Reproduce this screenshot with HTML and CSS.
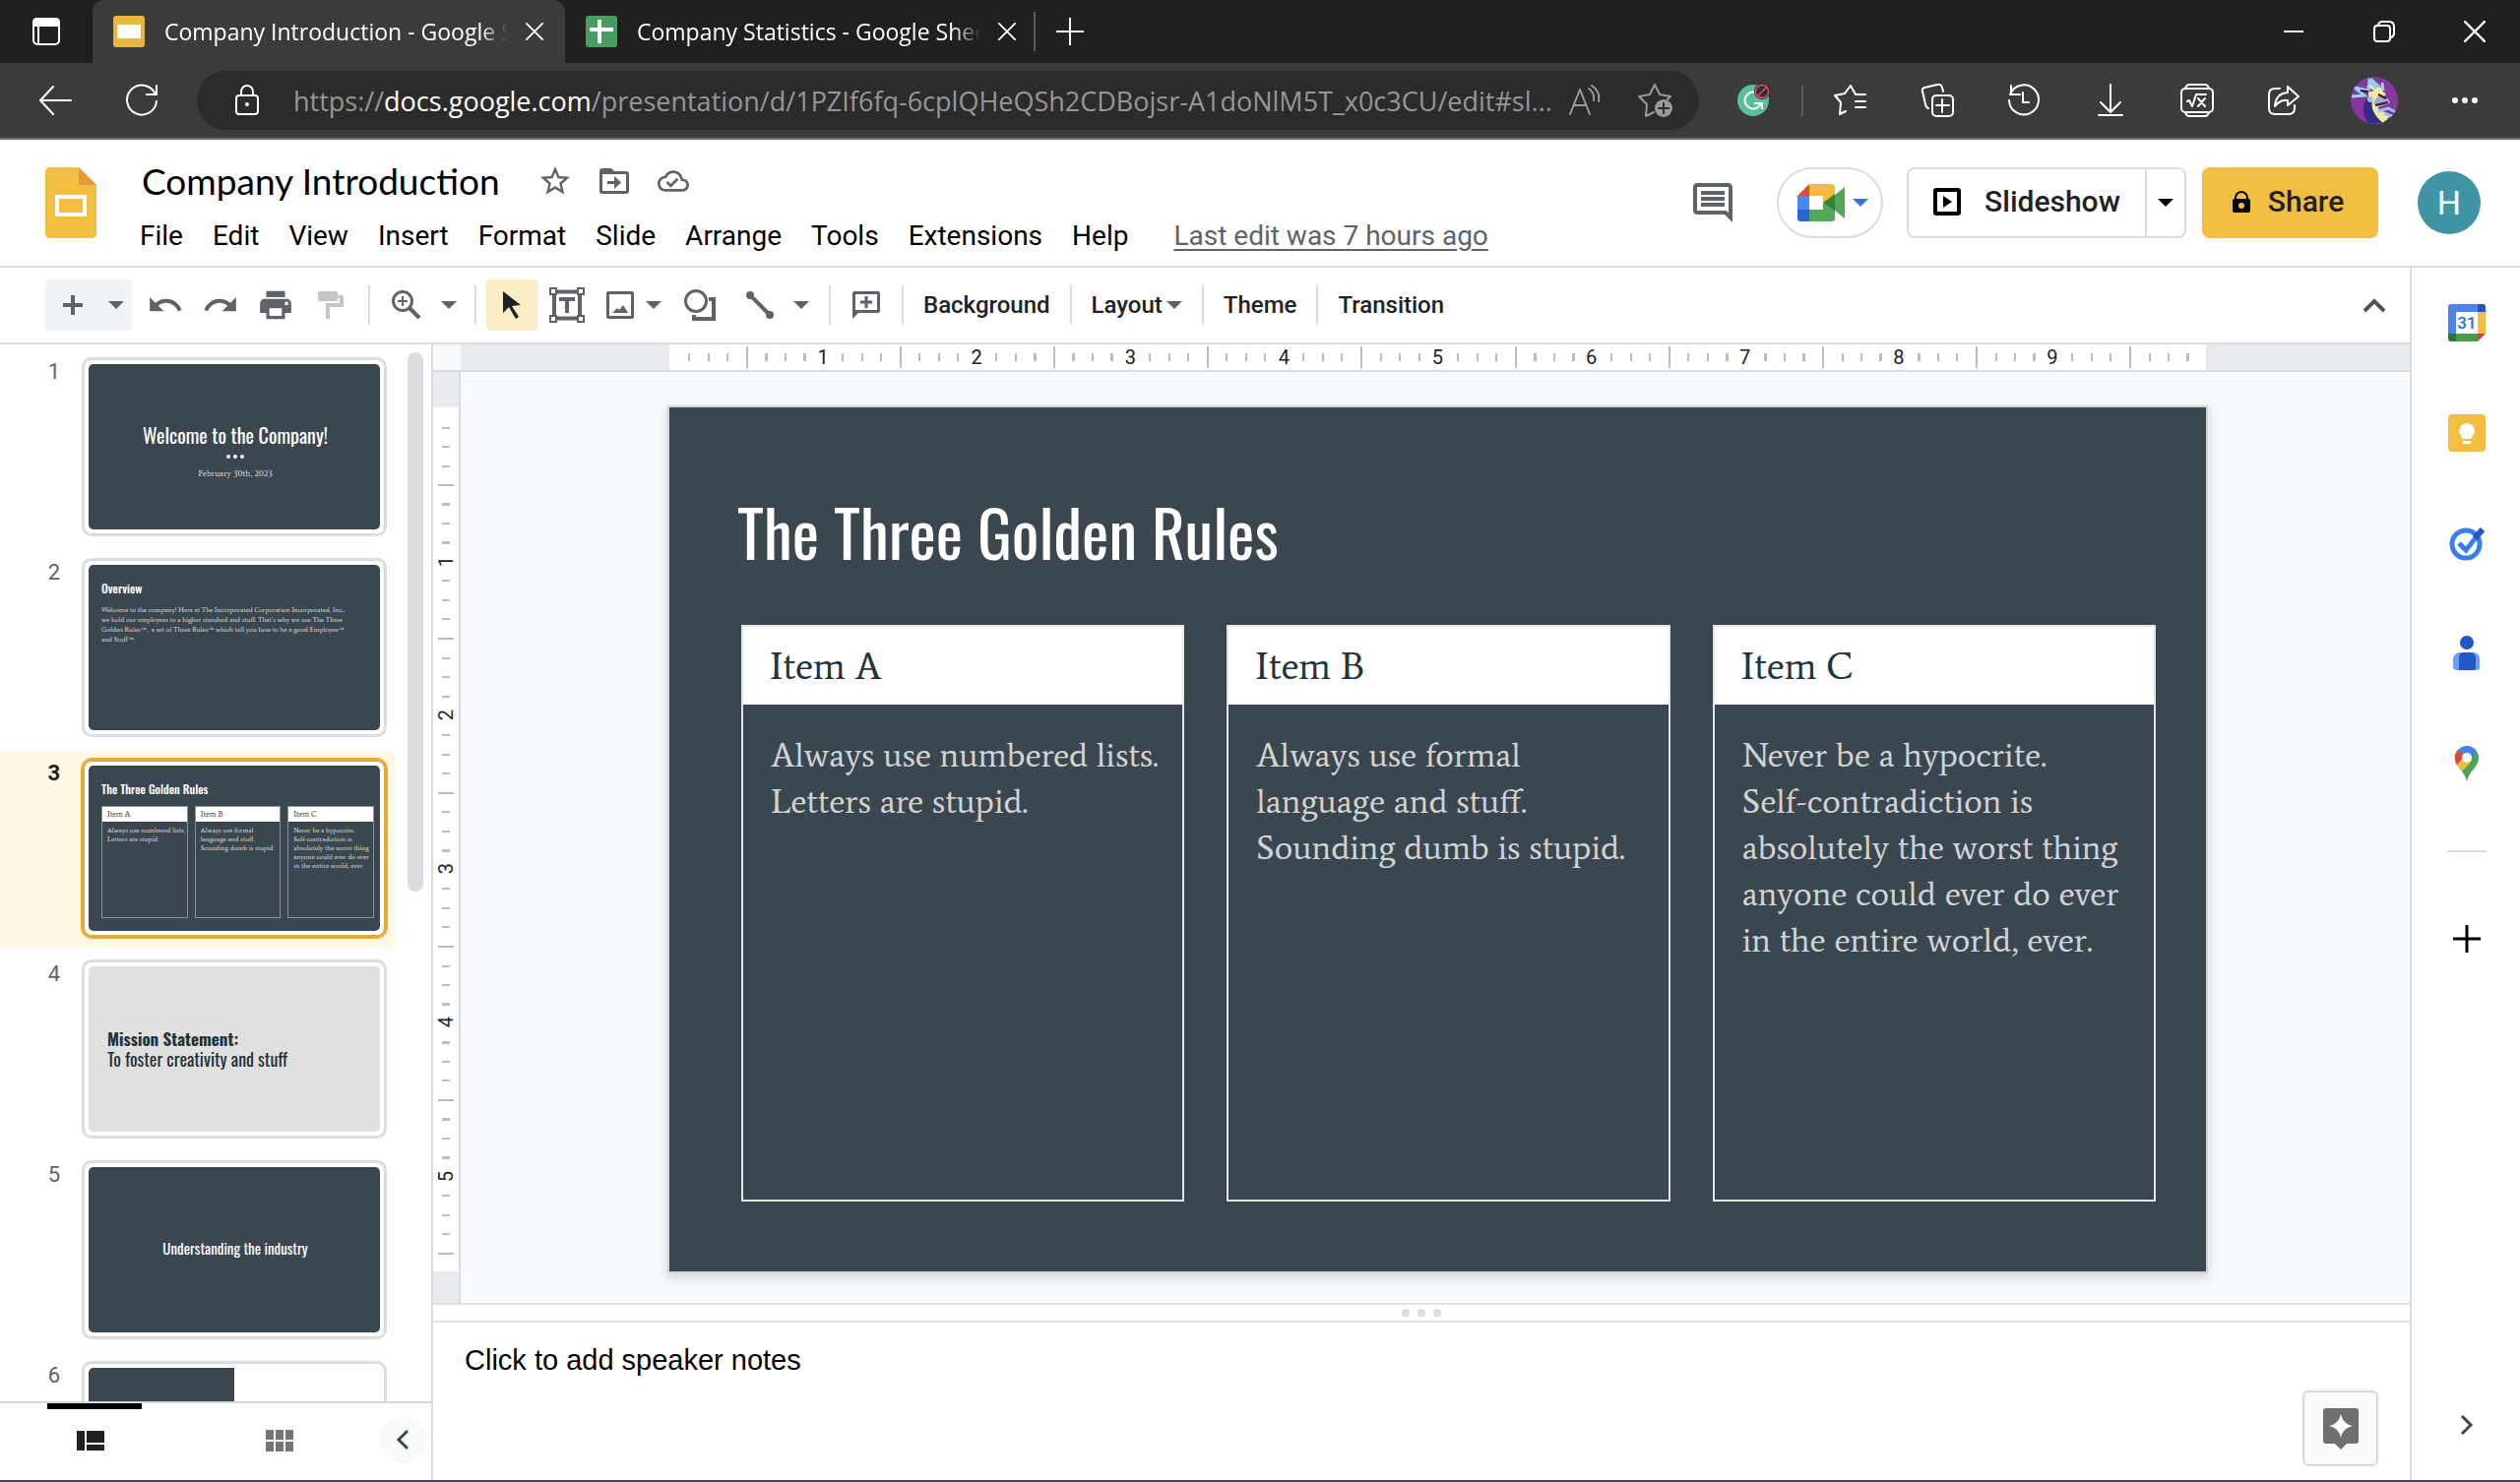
FILE: index.html
```html
<!DOCTYPE html>
<html lang="en">
<head>
<meta charset="utf-8">
<title>Company Introduction - Google Slides</title>
<link rel="stylesheet" href="styles.css">
</head>
<body>
<svg class="defs" width="0" height="0" aria-hidden="true">
  <symbol id="tri" viewBox="0 0 16 8"><path d="M0 0h16l-8 8z"/></symbol>
  <symbol id="cross" viewBox="0 0 20 20"><path d="M1 1l18 18M19 1L1 19"/></symbol>
</svg>

<div class="browser">
  <div class="tabs">
    <button class="tab-actions" aria-label="Tab actions"><svg width="30" height="30" viewBox="0 0 30 30" fill="none" stroke="#fff" stroke-width="2"><rect x="2" y="2" width="26" height="26" rx="4"/><path d="M2 6q0-4 4-4h18q4 0 4 4v3H2z" fill="#fff"/><path d="M7 9v19"/></svg></button>
    <div class="tab active">
      <svg width="32" height="32" viewBox="0 0 32 32"><rect width="32" height="32" rx="3" fill="#eab63c"/><rect x="4" y="9" width="24" height="14" fill="#fff"/></svg>
      <span class="tab-title">Company Introduction - Google Slides</span>
      <button class="tab-close" aria-label="Close tab"><svg class="line" width="18" height="18"><use href="#cross"/></svg></button>
    </div>
    <div class="tab">
      <svg width="32" height="32" viewBox="0 0 32 32"><rect width="32" height="32" rx="3" fill="#489c5f"/><path d="M12 4h4v24h-4zM4 12h24v4H4z" fill="#fff"/></svg>
      <span class="tab-title">Company Statistics - Google Sheets</span>
      <button class="tab-close" aria-label="Close tab"><svg class="line" width="18" height="18"><use href="#cross"/></svg></button>
    </div>
    <span class="tab-sep"></span>
    <button class="new-tab" aria-label="New tab"><svg class="line" width="28" height="28" viewBox="0 0 28 28"><path d="M14 0v28M0 14h28"/></svg></button>
    <div class="window-buttons">
      <button aria-label="Minimize"><svg class="line" width="20" height="20" viewBox="0 0 20 20"><path d="M0 10h20"/></svg></button>
      <button aria-label="Restore"><svg class="line" width="22" height="22" viewBox="0 0 22 22"><rect x="1" y="5" width="16" height="16" rx="3"/><path d="M5 4q1-3 4-3h7q5 0 5 5v7q0 3-3 4"/></svg></button>
      <button aria-label="Close"><svg class="line" width="22" height="22"><use href="#cross"/></svg></button>
    </div>
  </div>

  <div class="navbar">
    <button aria-label="Back"><svg class="line" width="34" height="30" viewBox="0 0 34 30"><path d="M15 1L2 15l13 14M2 15h31"/></svg></button>
    <button aria-label="Refresh"><svg class="line" width="34" height="34" viewBox="0 0 34 34"><path d="M31 11A15 15 0 1 0 32 18M32 2v9h-10"/></svg></button>
    <div class="address">
      <button class="site-info" aria-label="Site information"><svg class="line" width="24" height="32" viewBox="0 0 24 32"><rect x="1" y="11" width="22" height="19" rx="3"/><path d="M6 11V7a6 6 0 0 1 12 0v4"/><circle cx="12" cy="20" r="1"/></svg></button>
      <div class="url" contenteditable="true" role="textbox" aria-label="Address" spellcheck="false">https://<b>docs.google.com</b>/presentation/d/1PZIf6fq-6cplQHeQSh2CDBojsr-A1doNlM5T_x0c3CU/edit#sl...</div>
      <button class="read" aria-label="Read aloud"><svg class="line dim" width="32" height="32" viewBox="0 0 32 32"><path d="M1 30L11 5l10 25M5 21h12M20 4q6 4 5 12M23 1q9 6 7 16"/></svg></button>
      <button class="favorite" aria-label="Add to favorites"><svg class="line dim" width="36" height="36" viewBox="0 0 36 36"><path d="M16 30l-8 4 1-12-8-8 11-2 5-10 5 10 11 2-3 3"/><circle cx="26" cy="26" r="9" fill="#9a9a9a" stroke="none"/><path d="M26 21v10M21 26h10" stroke="#2b2b2b"/></svg></button>
    </div>
    <button aria-label="Grammarly"><svg width="36" height="34" viewBox="0 0 36 34"><circle cx="17" cy="17" r="16" fill="#57bf9b"/><path d="M20 9a8.500 8.500 0 1 0 5 11M18 20h8v6" fill="none" stroke="#fff" stroke-width="2"/><circle cx="26" cy="8" r="8" fill="#263238"/><circle cx="26" cy="8" r="6.500" fill="none" stroke="#f0485c" stroke-width="1.500"/><path d="M21 13L31 3" stroke="#f0485c" stroke-width="1.500"/></svg></button>
    <span class="nav-sep"></span>
    <button aria-label="Favorites"><svg class="line" width="34" height="34" viewBox="0 0 34 34"><path d="M12 28l-6 3 1-12-6-7 10-2 6-8 5 9h10M22 18h10M22 24h10"/></svg></button>
    <button aria-label="Collections"><svg class="line" width="34" height="34" viewBox="0 0 34 34"><rect x="12" y="12" width="21" height="21" rx="4"/><path d="M22 16v13M16 22h13M8 25q-2 0-3-4L2 8q-1-3 2-4l13-3q4-1 5 3l1 4"/></svg></button>
    <button aria-label="History"><svg class="line" width="34" height="34" viewBox="0 0 34 34"><path d="M3 11A15 15 0 1 1 2 17M4 2v9h9M16 9v10h6"/></svg></button>
    <button aria-label="Downloads"><svg class="line" width="26" height="34" viewBox="0 0 26 34"><path d="M13 1v27M3 19l10 10 10-10M1 32h24"/></svg></button>
    <button aria-label="Math solver"><svg class="line" width="34" height="34" viewBox="0 0 34 34"><rect x="1" y="5" width="32" height="24" rx="4"/><path d="M5 5q1-4 4-4h16q3 0 4 4M5 29q1 4 4 4h16q3 0 4-4M7 18l2-1 3 6 4-12h10M18 15l7 8M25 15l-7 8"/></svg></button>
    <button aria-label="Share page"><svg class="line" width="32" height="30" viewBox="0 0 32 30"><path d="M12 3H7q-6 0-6 6v14q0 6 6 6h14q6 0 6-6v-3M20 1l11 10-11 9v-5Q12 14 7 21 8 8 20 7z"/></svg></button>
    <button class="profile" aria-label="Profile"><svg width="48" height="48" viewBox="0 0 48 48"><defs><clipPath id="round"><circle cx="24" cy="24" r="24"/></clipPath></defs><g clip-path="url(#round)"><rect width="48" height="48" fill="#84389c"/><path d="M16 10L22 4l4 6 8 2-6 4z" fill="#f3ec9b"/><path d="M1 20l13-1-10-8 14 3 1-10 7 8M20 2l10 9M32 6l1 8" fill="none" stroke="#9ccdf2" stroke-width="3"/><path d="M10 14l8 1" stroke="#1f1f3d" stroke-width="2"/><path d="M18 16l12-4 6 6-6 6-2 8 12 8-8 8H20z" fill="#f3ec9b"/><path d="M14 26q4-8 8-2-3 12 12 24H18q-8-12-4-22z" fill="#342b87"/><path d="M27 20l11 2 2 5-12 4-5-4z" fill="#a9a4c8"/><path d="M28 18l8 4M25 29l13-3" stroke="#23203f" stroke-width="2"/><path d="M28 35l10-3 8 4M34 37l10 4" stroke="#9cc4ef" stroke-width="3" fill="none"/><circle cx="20" cy="23" r="3" fill="#a6c3f4"/></g></svg></button>
    <button aria-label="Settings and more"><svg width="28" height="8" viewBox="0 0 28 8" fill="#fff"><circle cx="4" cy="4" r="3"/><circle cx="14" cy="4" r="3"/><circle cx="24" cy="4" r="3"/></svg></button>
  </div>
</div>

<header class="doc-header">
  <a class="logo" href="#" aria-label="Slides home"><svg width="52" height="72" viewBox="0 0 52 72"><path d="M5 0h29l18 18v49q0 5-5 5H5q-5 0-5-5V5q0-5 5-5z" fill="#f2be42"/><path d="M34 0l18 18H34z" fill="#e59c36"/><path d="M10 28h32v22H10zM14 32v14h24V32z" fill="#fff" fill-rule="evenodd"/></svg></a>
  <div class="doc-info">
    <div class="title-row">
      <input class="doc-title" type="text" value="Company Introduction" aria-label="Document title">
      <button aria-label="Star"><svg width="36" height="36" viewBox="0 0 24 24"><path d="M22 9.240l-7.190-.62L12 2 9.190 8.630 2 9.240l5.460 4.730L5.820 21 12 17.270 18.180 21l-1.630-7.030L22 9.240zM12 15.400l-3.760 2.270 1-4.280-3.320-2.880 4.380-.38L12 6.100l1.710 4.040 4.380.38-3.320 2.880 1 4.280L12 15.400z"/></svg></button>
      <button aria-label="Move"><svg width="30" height="26" viewBox="0 0 30 26"><path d="M3 0h9l3 3h12q3 0 3 3v17q0 3-3 3H3q-3 0-3-3V3q0-3 3-3zM3 6v17h24V6z" fill-rule="evenodd"/><path d="M8 13h7V8l7 6.500-7 6.500v-5H8z"/></svg></button>
      <button aria-label="Saved to Drive"><svg width="32" height="32" viewBox="0 0 24 24"><path d="M19.350 10.040C18.670 6.590 15.640 4 12 4 9.110 4 6.600 5.640 5.350 8.040 2.340 8.360 0 10.910 0 14c0 3.310 2.690 6 6 6h13c2.760 0 5-2.240 5-5 0-2.640-2.050-4.780-4.650-4.960zM19 18H6c-2.210 0-4-1.790-4-4 0-2.050 1.530-3.760 3.560-3.970l1.070-.11.5-.95C8.080 7.140 9.940 6 12 6c2.620 0 4.880 1.860 5.390 4.430l.3 1.500 1.530.11c1.560.1 2.780 1.410 2.780 2.960 0 1.650-1.350 3-3 3zm-9-3.820l-2.090-2.090L6.500 13.500 10 17l6.010-6.010-1.410-1.410z"/></svg></button>
    </div>
    <nav class="menus">
      <button>File</button><button>Edit</button><button>View</button><button>Insert</button><button>Format</button><button>Slide</button><button>Arrange</button><button>Tools</button><button>Extensions</button><button>Help</button>
      <a href="#">Last edit was 7 hours ago</a>
    </nav>
  </div>
  <div class="doc-actions">
    <button class="comments" aria-label="Comments"><svg width="48" height="48" viewBox="0 0 24 24" fill="#5f6368"><path d="M21.990 4c0-1.100-.89-2-1.990-2H4c-1.100 0-2 .9-2 2v12c0 1.100.9 2 2 2h14l4 4-.01-18zM20 4v13.170L18.830 16H4V4h16zM6 12h12v2H6zm0-3h12v2H6zm0-3h12v2H6z"/></svg></button>
    <button class="meet" aria-label="Join a call"><svg width="48" height="38" viewBox="0 0 48 38"><path d="M12 0h23q3 0 3 3v10L26 20V12H12z" fill="#f5bb41"/><path d="M12 0v12H0z" fill="#e94435"/><path d="M0 12h12v14H0z" fill="#4a87f4"/><path d="M0 26h12v12H3q-3 0-3-3z" fill="#2a66d3"/><path d="M12 26h14v-7l12 9v7q0 3-3 3H12zM38 11l10-8v32l-10-8z" fill="#4fa955"/><path d="M38 10v18l-12-9z" fill="#37803a"/></svg><svg class="blue" width="16" height="8"><use href="#tri"/></svg></button>
    <div class="split">
      <button class="slideshow"><svg width="28" height="28" viewBox="0 0 28 28"><path d="M3 0h22q3 0 3 3v22q0 3-3 3H3q-3 0-3-3V3q0-3 3-3zM4 4v20h20V4z" fill-rule="evenodd"/><path d="M10 8v12l9-6z"/></svg>Slideshow</button>
      <button class="more" aria-label="Slideshow options"><svg width="16" height="8"><use href="#tri"/></svg></button>
    </div>
    <button class="share"><svg width="18" height="22" viewBox="0 0 18 22"><path d="M2 8h14q2 0 2 2v10q0 2-2 2H2q-2 0-2-2V10q0-2 2-2zm7 4a3 3 0 1 0 0 6 3 3 0 0 0 0-6z" fill-rule="evenodd"/><path d="M3 9V7a6 6 0 0 1 12 0v2" fill="none" stroke="#000" stroke-width="2"/></svg>Share</button>
    <button class="account" aria-label="Account">H</button>
  </div>
</header>

<div class="app">
  <main class="workspace">
    <div class="toolbar" role="toolbar">
      <div class="new-slide">
        <button class="w56" aria-label="New slide"><svg width="20" height="20" viewBox="0 0 20 20"><path d="M8 0h4v8h8v4h-8v8H8v-8H0V8h8z"/></svg></button>
        <button class="w32" aria-label="New slide with layout"><svg width="16" height="8"><use href="#tri"/></svg></button>
      </div>
      <button class="w56" aria-label="Undo"><svg width="38" height="38" viewBox="0 0 24 24"><path d="M12.500 8c-2.650 0-5.050.99-6.900 2.600L2 7v9h9l-3.620-3.620c1.390-1.160 3.160-1.880 5.120-1.880 3.540 0 6.550 2.310 7.600 5.500l2.370-.78C21.080 11.030 17.150 8 12.500 8z"/></svg></button>
      <button class="w56" aria-label="Redo"><svg width="38" height="38" viewBox="0 0 24 24"><path d="M18.400 10.600C16.550 8.990 14.150 8 11.500 8c-4.650 0-8.580 3.030-9.960 7.220L3.900 16c1.050-3.190 4.050-5.500 7.600-5.500 1.950 0 3.730.72 5.120 1.880L13 16h9V7l-3.600 3.600z"/></svg></button>
      <button class="w56" aria-label="Print"><svg width="38" height="38" viewBox="0 0 24 24"><path d="M19 8H5c-1.660 0-3 1.340-3 3v6h4v4h12v-4h4v-6c0-1.660-1.340-3-3-3zm-3 11H8v-5h8v5zm4-7h-2v-2h2zM18 3H6v4h12V3z"/></svg></button>
      <button class="w56" aria-label="Paint format"><svg width="26" height="28" viewBox="0 0 26 28" fill="#c4c5c7"><rect width="20" height="10" rx="2"/><path d="M20 4h6v12H12v12H8V12h14V7h-2z"/></svg></button>
      <span class="sep"></span>
      <button class="w54" aria-label="Zoom"><svg width="30" height="30" viewBox="0 0 30 30" fill="none" stroke="#5f6368" stroke-width="3"><circle cx="11" cy="11" r="9.500"/><path d="M18 18l10 10" stroke-width="4"/><path d="M11 6v10M6 11h10" stroke-width="2"/></svg></button>
      <button class="w32" aria-label="Zoom level"><svg width="16" height="8"><use href="#tri"/></svg></button>
      <span class="sep"></span>
      <button class="w52 selected" aria-label="Select"><svg width="18" height="28" viewBox="0 0 18 28" fill="#202124"><path d="M0 0l18 14-9 1 7 11-3 2-7-12-6 6z"/></svg></button>
      <button class="w60" aria-label="Text box"><svg width="36" height="36" viewBox="0 0 36 36" fill="none" stroke="#5f6368" stroke-width="2"><path d="M5 4.500h26v27H5z" stroke-width="4"/><g fill="#fff"><rect x="1" y="1" width="6" height="6"/><rect x="29" y="1" width="6" height="6"/><rect x="1" y="29" width="6" height="6"/><rect x="29" y="29" width="6" height="6"/></g><path d="M10 12h16M18 12v14" stroke-width="4"/></svg></button>
      <button class="w48" aria-label="Insert image"><svg width="28" height="28" viewBox="0 0 28 28"><path d="M2 0h24q2 0 2 2v24q0 2-2 2H2q-2 0-2-2V2q0-2 2-2zM3 3v22h22V3z" fill-rule="evenodd"/><path d="M6 22l5-5 2 2 4-5 5 8z"/></svg></button>
      <button class="w20" aria-label="Image options"><svg width="16" height="8"><use href="#tri"/></svg></button>
      <button class="w74" aria-label="Shape"><svg width="32" height="32" viewBox="0 0 32 32" fill="none" stroke="#5f6368" stroke-width="4"><circle cx="12" cy="12" r="10.500" stroke-width="3"/><path d="M25 10h5v20H10v-4"/></svg></button>
      <button class="w48" aria-label="Line"><svg width="28" height="28" viewBox="0 0 28 28"><path d="M4 4l20 20" stroke="#5f6368" stroke-width="4"/><circle cx="4" cy="4" r="4"/><circle cx="24" cy="24" r="4"/></svg></button>
      <button class="w36" aria-label="Line options"><svg width="16" height="8"><use href="#tri"/></svg></button>
      <span class="sep"></span>
      <button class="w52" aria-label="Add comment"><svg width="28" height="28" viewBox="0 0 28 28"><path d="M2 0h24q2 0 2 2v18q0 2-2 2H6l-6 6V2q0-2 2-2zM3 3v16h22V3z" fill-rule="evenodd"/><path d="M12.500 5h3v4.500H20v3h-4.500V17h-3v-4.500H8v-3h4.500z"/></svg></button>
      <span class="sep"></span>
      <button class="text">Background</button>
      <span class="sep"></span>
      <button class="text">Layout<svg width="16" height="8"><use href="#tri"/></svg></button>
      <span class="sep"></span>
      <button class="text">Theme</button>
      <span class="sep"></span>
      <button class="text">Transition</button>
      <button class="w56 collapse" aria-label="Hide the menus"><svg width="24" height="16" viewBox="0 0 24 16"><path d="M2 14L12 4l10 10" fill="none" stroke="#50545a" stroke-width="4"/></svg></button>
    </div>

    <div class="panes">
      <aside class="filmstrip">
        <ol class="slides">
          <li><span class="num">1</span><div class="frame"><div class="thumb center"><span class="t-hero">Welcome to the Company!</span><span class="t-dots"><i></i><i></i><i></i></span><span class="t-date">February 30th, 2023</span></div></div></li>
          <li><span class="num">2</span><div class="frame"><div class="thumb"><span class="t-title">Overview</span><p class="t-body">Welcome to the company! Here at The Incorporated Corporation Incorporated, Inc.,<br>we hold our employees to a higher standard and stuff. That’s why we use The Three<br>Golden Rules™,&nbsp; a set of Three Rules™ which tell you how to be a good Employee™<br>and Stuff™.</p></div></div></li>
          <li class="current"><span class="num">3</span><div class="frame"><div class="thumb"><span class="t-title">The Three Golden Rules</span>
            <div class="t-cards">
              <div><b>Item A</b><p>Always use numbered lists.<br>Letters are stupid.</p></div>
              <div><b>Item B</b><p>Always use formal<br>language and stuff.<br>Sounding dumb is stupid.</p></div>
              <div><b>Item C</b><p>Never be a hypocrite.<br>Self-contradiction is<br>absolutely the worst thing<br>anyone could ever do ever<br>in the entire world, ever.</p></div>
            </div></div></div></li>
          <li><span class="num">4</span><div class="frame"><div class="thumb pale"><b>Mission Statement:</b><span>To foster creativity and stuff</span></div></div></li>
          <li><span class="num">5</span><div class="frame"><div class="thumb center"><span class="t-section">Understanding the industry</span></div></div></li>
          <li><span class="num">6</span><div class="frame"><div class="thumb half"></div></div></li>
        </ol>
        <span class="scroll-thumb"></span>
        <div class="view-switch">
          <button class="view on" aria-label="Filmstrip view"><svg width="28" height="20" viewBox="0 0 28 20" fill="#202124"><path d="M0 0h8v20H0zM10 0h18v12H10zM10 14h18v6H10z"/></svg></button>
          <button class="view" aria-label="Grid view"><svg width="28" height="22" viewBox="0 0 28 22" fill="#757575"><path d="M0 0h8v10H0zM10 0h8v10h-8zM20 0h8v10h-8zM0 12h8v10H0zM10 12h8v10h-8zM20 12h8v10h-8z"/></svg></button>
          <button class="hide" aria-label="Hide filmstrip"><svg width="14" height="22" viewBox="0 0 14 22" fill="none" stroke="#444746" stroke-width="3"><path d="M12 2L3 11l9 9"/></svg></button>
        </div>
      </aside>

      <section class="editor">
        <div class="ruler-row">
          <div class="ruler across"><span class="first"></span><span>1</span><span>2</span><span>3</span><span>4</span><span>5</span><span>6</span><span>7</span><span>8</span><span>9</span><span class="last"></span></div>
        </div>
        <div class="canvas-row">
          <div class="ruler-col"><div class="ruler down"><span class="first"></span><span>1</span><span>2</span><span>3</span><span>4</span><span>5</span><span class="last"></span></div></div>
          <div class="canvas">
            <article class="slide">
              <h1>The Three Golden Rules</h1>
              <div class="cards">
                <div class="card"><h2>Item A</h2><p>Always use numbered lists.<br>Letters are stupid.</p></div>
                <div class="card"><h2>Item B</h2><p>Always use formal<br>language and stuff.<br>Sounding dumb is stupid.</p></div>
                <div class="card"><h2>Item C</h2><p>Never be a hypocrite.<br>Self-contradiction is<br>absolutely the worst thing<br>anyone could ever do ever<br>in the entire world, ever.</p></div>
              </div>
            </article>
          </div>
        </div>
        <div class="grip"><i></i><i></i><i></i></div>
        <div class="notes">
          <textarea aria-label="Speaker notes" placeholder="Click to add speaker notes"></textarea>
          <button class="explore" aria-label="Explore"><svg width="36" height="42" viewBox="0 0 36 42"><path d="M3 0h30q3 0 3 3v30q0 3-3 3H24l-6 6-6-6H3q-3 0-3-3V3q0-3 3-3z" fill="#6f6f6f"/><path d="M18 6q2 10 12 12-10 2-12 12-2-10-12-12 10-2 12-12z" fill="#fff"/></svg></button>
        </div>
      </section>
    </div>
  </main>

  <aside class="side">
    <button aria-label="Calendar"><svg width="38" height="38" viewBox="0 0 38 38"><path d="M3 0h27v8H8v22H0V3q0-3 3-3z" fill="#4e82ee"/><path d="M30 0h5q3 0 3 3v5h-8z" fill="#2353b8"/><path d="M30 8h8v22h-8z" fill="#f5bf42"/><path d="M8 30h22v8H8z" fill="#489c50"/><path d="M0 30h8v8H3q-3 0-3-3z" fill="#297a30"/><path d="M30 30h8l-8 8z" fill="#dc4132"/><path d="M8 8h22v22H8z" fill="#fff"/><text x="19" y="25" text-anchor="middle" class="day">31</text></svg></button>
    <button aria-label="Keep"><svg width="38" height="38" viewBox="0 0 38 38"><rect width="38" height="38" rx="4" fill="#f2be42"/><path d="M19 9a8 8 0 0 0-5 14v2h10v-2a8 8 0 0 0-5-14zM15 27h8v3h-8z" fill="#fff"/></svg></button>
    <button aria-label="Tasks"><svg width="38" height="38" viewBox="0 0 38 38" fill="none"><circle cx="18" cy="20" r="14" stroke="#3b7ded" stroke-width="5"/><path d="M11 19l7 7L34 6" stroke="#3b7ded" stroke-width="5"/><path d="M27 14l8-9" stroke="#2258c3" stroke-width="6"/></svg></button>
    <button aria-label="Contacts"><svg width="30" height="36" viewBox="0 0 30 36"><circle cx="15" cy="7" r="7" fill="#2456c4"/><path d="M9 17h12q7 0 7 8v7q0 3-3 3H5q-4 0-4-4v-6q0-8 8-8z" fill="#6f9bf2"/><path d="M12 17h6q6 0 6 6v9q0 3-3 3H7V23q0-6 5-6z" fill="#2456c4"/></svg></button>
    <button aria-label="Maps"><svg width="26" height="36" viewBox="0 0 26 36"><path d="M13 0a12 12 0 0 1 12 12c0 10-9 12-12 24C10 24 1 22 1 12A12 12 0 0 1 13 0z" fill="#4ea457"/><path d="M13 0a12 12 0 0 1 10 6L13 17 4 5a12 12 0 0 1 9-5z" fill="#4a80ea"/><path d="M4 4l8 7-9 9Q-2 10 4 4z" fill="#d94a38"/><path d="M3 19l8-9 7 5-10 11z" fill="#f0bf43"/><circle cx="13" cy="12" r="5" fill="#fff"/></svg></button>
    <hr>
    <button aria-label="Get add-ons"><svg width="28" height="28" viewBox="0 0 28 28"><path d="M14 0v28M0 14h28" stroke="#000" stroke-width="3"/></svg></button>
    <button class="side-hide" aria-label="Hide side panel"><svg width="14" height="22" viewBox="0 0 14 22" fill="none" stroke="#444746" stroke-width="3"><path d="M2 2l9 9-9 9"/></svg></button>
  </aside>
</div>
</body>
</html>
```
FILE: styles.css
```css
* { box-sizing: border-box; }

html, body { height: 100%; }

body {
  margin: 0;
  display: flex;
  flex-direction: column;
  overflow: hidden;
  background: #fff;
  border-bottom: 2px solid #42444f;
  font-family: Roboto, "Liberation Sans", sans-serif;
  color: #202124;
}

button, input, textarea {
  font: inherit;
  color: inherit;
  background: none;
  border: 0;
  padding: 0;
  margin: 0;
}

button {
  display: flex;
  align-items: center;
  justify-content: center;
  flex: none;
  white-space: nowrap;
}

svg { flex: none; display: block; }
.defs { position: absolute; }
.line { fill: none; stroke: #fff; stroke-width: 2; stroke-linecap: round; stroke-linejoin: round; }
.dim { stroke: #9a9a9a; }

/* Browser chrome */
.browser {
  flex: none;
  background: #3b3b3b;
  border-bottom: 2px solid #6d6d6d;
  color: #fff;
  font-family: "Open Sans", "Noto Sans", sans-serif;
}

.tabs { display: flex; height: 64px; background: #202020; align-items: center; }
.tab-actions { width: 94px; height: 100%; }
.tab {
  display: flex;
  align-items: center;
  width: 480px;
  height: 100%;
  padding: 0 22px 0 21px;
  font-size: 23px;
}
.tab.active { background: #3b3b3b; border-radius: 12px 12px 0 0; }
.tab-title {
  flex: 1;
  min-width: 0;
  margin: 0 18px 0 20px;
  overflow: hidden;
  white-space: nowrap;
  -webkit-mask-image: linear-gradient(90deg, #000 92%, transparent);
  mask-image: linear-gradient(90deg, #000 92%, transparent);
}
.tab-close { width: 18px; height: 18px; }
.tab-sep { width: 2px; height: 40px; margin-left: -4px; background: #5c5c5c; }
.new-tab { width: 70px; height: 100%; }
.window-buttons { display: flex; height: 100%; margin-left: auto; }
.window-buttons button { width: 92px; height: 100%; }

.navbar { display: flex; align-items: center; height: 76px; padding: 0 12px; }
.navbar > button { width: 88px; height: 100%; }
.navbar > .profile { width: 96px; }
.nav-sep { width: 2px; height: 32px; margin: 0 4px; background: #5c5c5c; }
.address {
  display: flex;
  align-items: center;
  flex: 1;
  min-width: 0;
  height: 60px;
  margin: 0 12px;
  padding: 0 2px 0 4px;
  border-radius: 30px;
  background: #2b2b2b;
}
.address button { height: 100%; }
.address .site-info { width: 94px; }
.address .read { width: 60px; }
.address .favorite { width: 84px; }
.url {
  flex: 1;
  min-width: 0;
  overflow: hidden;
  white-space: nowrap;
  font-size: 27px;
  color: #969696;
}
.url b { font-weight: 400; color: #fff; }

/* Document header */
.doc-header {
  display: flex;
  align-items: center;
  flex: none;
  height: 130px;
  padding: 0 40px 0 46px;
  border-bottom: 2px solid #dadce0;
}
.logo { margin-right: 46px; }
.doc-info { flex: 1; min-width: 0; align-self: flex-start; padding-top: 17px; }
.title-row { display: flex; align-items: center; height: 50px; fill: #5f6368; }
.title-row button { width: 60px; height: 40px; }
.doc-title { width: 390px; font: 37px/44px "Google Sans", Lato, sans-serif; color: #000; }
.menus { display: flex; align-items: center; gap: 30px; height: 60px; margin-left: -2px; font-size: 28px; color: #000; }
.menus a { margin-left: 16px; color: #5f6368; white-space: nowrap; text-underline-offset: 4px; }

.doc-actions { display: flex; align-items: center; }
.meet, .split, .share { height: 72px; }
.comments { margin-right: 41px; }
.meet { width: 108px; gap: 8px; margin-right: 24px; padding-left: 6px; border: 2px solid #dadce0; border-radius: 36px; }
.blue { fill: #3871e0; }
.split { display: flex; margin-right: 16px; border: 2px solid #dadce0; border-radius: 8px; }
.slideshow { width: 240px; gap: 24px; padding-bottom: 3px; font-size: 30px; font-weight: 500; }
.more { width: 40px; border-left: 2px solid #dadce0; }
.share { width: 179px; gap: 18px; margin-right: 40px; padding: 0 4px 3px 0; border-radius: 8px; background: #f2be42; font-size: 30px; font-weight: 500; }
.account { width: 64px; height: 64px; border-radius: 50%; background: #4095a5; color: #fff; font-size: 34px; }

/* Workspace */
.app { display: flex; flex: 1; min-height: 0; }
.workspace { display: flex; flex-direction: column; flex: 1; min-width: 0; }

.toolbar {
  display: flex;
  align-items: center;
  flex: none;
  height: 78px;
  padding: 0 8px 0 46px;
  border-bottom: 2px solid #dadce0;
  fill: #5f6368;
  font-size: 24px;
  font-weight: 500;
}
.toolbar button { height: 52px; }
.new-slide { display: flex; margin-right: 6px; border-radius: 4px; background: #f1f3f4; }
.sep { width: 2px; height: 40px; margin: 0 10px; background: #dadce0; }
.w20 { width: 20px; } .w32 { width: 32px; } .w36 { width: 36px; } .w48 { width: 48px; } .w52 { width: 52px; }
.w54 { width: 54px; } .w56 { width: 56px; } .w60 { width: 60px; } .w74 { width: 74px; }
.selected { border-radius: 4px; background: #fbedc6; }
.text { padding: 0 10px; gap: 4px; }
.collapse { margin-left: auto; }

.panes { display: flex; flex: 1; min-height: 0; }

/* Filmstrip */
.filmstrip {
  position: relative;
  display: flex;
  flex-direction: column;
  flex: none;
  width: 440px;
  border-right: 2px solid #dadce0;
}
.slides { flex: 1; min-height: 0; margin: 0; padding: 5px 0 0; overflow: hidden; list-style: none; }
.slides li {
  display: flex;
  width: 402px;
  height: 200px;
  margin-bottom: 4px;
  padding-top: 8px;
  border-radius: 0 8px 8px 0;
}
.num { width: 83px; padding-right: 22px; text-align: right; font-size: 22px; line-height: 30px; color: #5f6368; }
.frame { width: 310px; height: 182px; padding: 4px; border: 3px solid #dadce0; border-radius: 10px; background: #fff; }
.current { background: #fef7e4; }
.current .num { font-weight: 700; color: #202124; }
.current .frame { border-color: #e3aa34; outline: 1px solid #e3aa34; }

.thumb {
  display: flex;
  flex-direction: column;
  height: 168px;
  padding: 15px 6px 0 13px;
  overflow: hidden;
  border-radius: 5px;
  background: #3b474e;
  color: #fff;
  font-family: Oswald, "Liberation Sans Narrow", sans-serif;
  white-space: nowrap;
}
.thumb.center { align-items: center; justify-content: center; padding: 0 0 0 2px; }
.t-hero { margin-top: 8px; font-size: 20px; line-height: 28px; }
.t-dots { display: flex; gap: 3px; margin: 6px 0 8px; }
.t-dots i { width: 4px; height: 4px; border-radius: 50%; background: #fff; }
.t-date { font: 9px/14px Average, "Liberation Serif", serif; color: #d5d8da; }
.t-title { font-size: 12px; line-height: 18px; font-weight: 500; }
.t-body { margin: 8px 0 0; font: 7px/10px Average, "Liberation Serif", serif; color: #d5d8da; }
.t-section { font-size: 15px; line-height: 18px; margin-bottom: 4px; }
.t-cards { display: grid; grid-template-columns: repeat(3, minmax(0, 1fr)); gap: 7px; height: 114px; margin-top: 8px; font: 7px/9px Average, "Liberation Serif", serif; }
.t-cards div { border: 1px solid #86919a; }
.t-cards b { display: block; height: 15px; padding-left: 5px; background: #fff; color: #3b474e; font-size: 8px; font-weight: 400; line-height: 15px; }
.t-cards p { margin: 4px 0 0 5px; color: #d5d8da; }
.thumb.pale { justify-content: center; padding: 0 0 0 19px; background: #e0e0e0; color: #1f323c; font-size: 18px; line-height: 21px; }
.pale b { font-size: 17px; }
.half { background: linear-gradient(90deg, #3b474e 50%, #fff 50%); }

.scroll-thumb { position: absolute; top: 8px; right: 8px; width: 16px; height: 548px; border-radius: 8px; background: #dadce0; }

.view-switch { display: flex; align-items: center; flex: none; height: 80px; border-top: 2px solid #d5d6d8; }
.view { width: 96px; height: 100%; margin-left: 48px; border-top: 6px solid transparent; padding-bottom: 8px; }
.view.on { border-color: #000; padding-right: 8px; }
.view + .view { margin-left: 92px; }
.hide { width: 48px; height: 48px; margin: 0 4px 4px auto; padding-right: 3px; border-radius: 50%; background: #f8f9fb; }

/* Editor */
.editor { display: flex; flex-direction: column; flex: 1; min-width: 0; }
.ruler-row { height: 28px; padding: 0 207px 0 240px; border-bottom: 2px solid #d9dbde; background: linear-gradient(90deg, #f8f9fb 28px, #e8eaed 28px); }
.ruler { display: flex; height: 100%; background: #fff; font-size: 20px; line-height: 26px; color: #202124; }
.ruler span { display: flex; align-items: center; justify-content: center; flex: 100; background-repeat: no-repeat; }
.across span {
  background-image: linear-gradient(#b9bcc0, #b9bcc0), linear-gradient(#fff, #fff), repeating-linear-gradient(90deg, #b9bcc0 0 2px, transparent 2px 12.5%);
  background-size: 2px 22px, 24px 100%, 100% 8px;
  background-position: 0 50%, 50% 50%, 0 50%;
}
.ruler .first, .ruler .last { flex: 50; }
.across .first { background-image: linear-gradient(#fff, #fff), repeating-linear-gradient(90deg, #b9bcc0 0 2px, transparent 2px 25%); background-size: 4px 100%, 100% 8px; background-position: 0 50%; }
.across .last { background-image: linear-gradient(#b9bcc0, #b9bcc0), repeating-linear-gradient(90deg, #b9bcc0 0 2px, transparent 2px 25%); background-size: 2px 22px, 100% 8px; background-position: 0 50%; }

.canvas-row { display: flex; }
.ruler-col { flex: none; width: 28px; padding: 36px 0 32px; border-right: 2px solid #d9dbde; background: #e8eaed; }
.down { flex-direction: column; }
.down span {
  writing-mode: sideways-lr;
  background-image: linear-gradient(#b9bcc0, #b9bcc0), linear-gradient(#fff, #fff), repeating-linear-gradient(#b9bcc0 0 2px, transparent 2px 12.5%);
  background-size: 16px 2px, 100% 24px, 8px 100%;
  background-position: 50% 0, 50% 50%, 50% 0;
}
.down .first { background-image: linear-gradient(#fff, #fff), repeating-linear-gradient(#b9bcc0 0 2px, transparent 2px 25%); background-size: 100% 4px, 8px 100%; background-position: 50% 0; }
.down .last { flex: 12; background-image: linear-gradient(#b9bcc0, #b9bcc0); background-size: 16px 2px; background-position: 50% 0; }

.canvas { flex: 1; min-width: 0; padding: 36px 207px 32px 212px; background: #f8f9fb; }
.slide {
  display: flex;
  flex-direction: column;
  aspect-ratio: 16 / 9;
  padding: 0 51px 71px 69px;
  background: #3b474e;
  box-shadow: 0 0 0 2px #d3d5d4, 0 4px 10px 2px rgba(60, 64, 67, .2);
}
.slide h1 {
  margin: 0;
  height: 221px;
  padding-top: 86px;
  color: #fff;
  font: 400 65px/80px Oswald, "Liberation Sans Narrow", sans-serif;
  white-space: nowrap;
}
.cards { display: grid; grid-template-columns: repeat(3, 1fr); gap: 43px; flex: 1; margin-left: 4px; font-family: Average, "Liberation Serif", serif; }
.card { border: 2px solid #e3e5e6; color: #cfd3d4; }
.card h2 { height: 79px; margin: 0; padding-left: 27px; background: #fff; color: #22343d; font-size: 39px; font-weight: 400; line-height: 80px; }
.card p { margin: 28px 0 0 28px; font-size: 35px; line-height: 47px; white-space: nowrap; }

.grip { display: flex; align-items: center; justify-content: center; gap: 8px; flex: none; height: 20px; border: solid #e2e3e4; border-width: 2px 0; }
.grip i { width: 8px; height: 8px; border-radius: 50%; background: #dadce0; }
.notes { display: flex; align-items: flex-end; flex: 1; min-height: 0; }
.notes textarea { flex: 1; align-self: stretch; padding: 20px 32px; resize: none; outline: 0; font: 29px/36px "Liberation Sans", sans-serif; }
.notes textarea::placeholder { color: #000; opacity: 1; }
.explore { width: 73px; height: 73px; margin: 0 34px 16px 0; border-radius: 4px; background: #fafafa; box-shadow: 0 0 3px 1px rgba(0, 0, 0, .3); }

/* Side panel */
.side { display: flex; flex-direction: column; align-items: center; flex: none; width: 112px; padding-left: 2px; border-left: 2px solid #dadce0; }
.side button { width: 100%; height: 112px; }
.side hr { width: 40px; height: 2px; margin: 32px 0; border: 0; background: #dadce0; }
.side .side-hide { margin-top: auto; }
.day { font: 500 17px Roboto, sans-serif; fill: #2a6be0; }
```
